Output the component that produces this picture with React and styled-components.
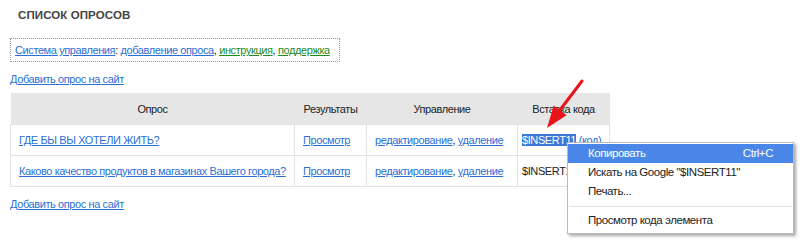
import React from "react";
import styled, { createGlobalStyle } from "styled-components";

const Global = createGlobalStyle`
  body {
    margin: 0;
    background: #fff;
    font-family: "Liberation Sans", Arial, sans-serif;
    font-size: 11px;
    letter-spacing: -0.4px;
    color: #222;
  }
`;

const Page = styled.div`
  position: relative;
  width: 800px;
  height: 243px;
  padding: 0 10px;
  box-sizing: border-box;
  overflow: hidden;
`;

const Title = styled.h1`
  margin: 0;
  padding: 9px 0 0 8px;
  height: 38px;
  box-sizing: border-box;
  font-size: 11.5px;
  letter-spacing: 0.1px;
  font-weight: bold;
  color: #444;
`;

const NavBox = styled.div`
  display: inline-block;
  border: 1px dotted #999;
  padding: 5px 9px 5px 4px;
  line-height: 12px;
`;

const Link = styled.a`
  color: ${({ $green }) => ($green ? "#1f8a1f" : "#2a6fd6")};
  text-decoration: underline;
  cursor: pointer;
`;

const AddLink = styled.div`
  margin-top: ${({ $top }) => $top};
  line-height: 12px;
`;

const Table = styled.table`
  margin-top: 8px;
  border-collapse: collapse;
  table-layout: fixed;
  width: 599px;
`;

const Th = styled.th`
  background: #e6e6e6;
  font-weight: normal;
  color: #222;
  height: 31px;
  text-align: center;
  padding: 0;
  width: ${({ $w }) => $w}px;
`;

const Td = styled.td`
  border: 1px solid #e2e2e2;
  height: 30px;
  padding: 0 ${({ $pad }) => $pad || 8}px;
  white-space: nowrap;
`;

const Selected = styled.span`
  background: #3b78d8;
  color: #fff;
`;

const Menu = styled.div`
  position: absolute;
  left: 567px;
  top: 142px;
  width: 225px;
  background: #fff;
  border: 1px solid #bbb;
  box-shadow: 2px 2px 3px rgba(0, 0, 0, 0.35);
  padding: 1px 0 3px;
  font-size: 11.5px;
  letter-spacing: -0.45px;
  color: #222;
`;

const Item = styled.div`
  display: flex;
  justify-content: space-between;
  height: 19px;
  line-height: 19px;
  padding: 0 20px;
  background: ${({ $active }) => ($active ? "#4a86e8" : "transparent")};
  color: ${({ $active }) => ($active ? "#fff" : "#222")};
`;

const Sep = styled.div`
  height: 1px;
  background: #e4e4e4;
  margin: 5px 1px 4px;
`;

const Arrow = styled.svg`
  position: absolute;
  left: 540px;
  top: 76px;
`;

export default function App() {
  return (
    <Page>
      <Global />
      <Title>СПИСОК ОПРОСОВ</Title>
      <NavBox>
        <Link>Система управления</Link>: <Link>добавление опроса</Link>,{" "}
        <Link $green>инструкция</Link>, <Link $green>поддержка</Link>
      </NavBox>
      <AddLink $top="11px">
        <Link>Добавить опрос на сайт</Link>
      </AddLink>
      <Table>
        <thead>
          <tr>
            <Th $w={284}>Опрос</Th>
            <Th $w={72}>Результаты</Th>
            <Th $w={151}>Управление</Th>
            <Th $w={92}>Вставка кода</Th>
          </tr>
        </thead>
        <tbody>
          <tr>
            <Td><Link>ГДЕ БЫ ВЫ ХОТЕЛИ ЖИТЬ?</Link></Td>
            <Td><Link>Просмотр</Link></Td>
            <Td><Link>редактирование</Link>, <Link>удаление</Link></Td>
            <Td $pad={4}><Selected>$INSERT11</Selected> <Link>(код)</Link></Td>
          </tr>
          <tr>
            <Td><Link>Каково качество продуктов в магазинах Вашего города?</Link></Td>
            <Td><Link>Просмотр</Link></Td>
            <Td><Link>редактирование</Link>, <Link>удаление</Link></Td>
            <Td $pad={4}>$INSERT11 <Link>(код)</Link></Td>
          </tr>
        </tbody>
      </Table>
      <AddLink $top="11px">
        <Link>Добавить опрос на сайт</Link>
      </AddLink>

      <Arrow width="50" height="56" viewBox="0 0 50 56">
        <line x1="42" y1="5" x2="20" y2="34" stroke="#e8141a" strokeWidth="3" strokeLinecap="round" />
        <polygon points="7,52 13.7,29.6 26.5,39.2" fill="#e8141a" />
      </Arrow>

      <Menu>
        <Item $active>
          <span>Копировать</span>
          <span>Ctrl+C</span>
        </Item>
        <Item>
          <span>Искать на Google "$INSERT11"</span>
        </Item>
        <Item>
          <span>Печать...</span>
        </Item>
        <Sep />
        <Item>
          <span>Просмотр кода элемента</span>
        </Item>
      </Menu>
    </Page>
  );
}
